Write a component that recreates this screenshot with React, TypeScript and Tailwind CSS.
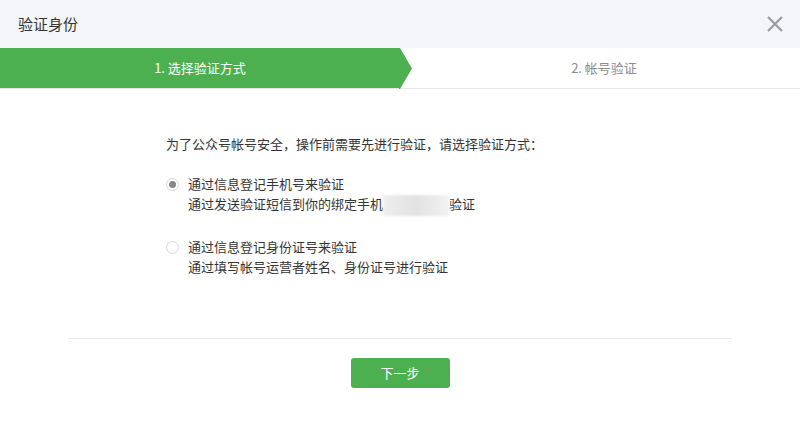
import React from "react";

const font = { fontFamily: '"PingFang SC","Noto Sans CJK SC","Liberation Sans",sans-serif' };

export default function App() {
  return (
    <div className="w-[800px] h-[438px] bg-white overflow-hidden" style={font}>
      <div className="h-[48px] bg-[#f4f5f9] flex items-center justify-between pl-[18px] pr-[16px]">
        <span className="text-[15px] text-[#353535]">验证身份</span>
        <svg width="18" height="18" viewBox="0 0 18 18" className="mt-[-1px]">
          <path d="M2 2 L16 16 M16 2 L2 16" stroke="#9a9a9a" strokeWidth="2.2" strokeLinecap="butt" />
        </svg>
      </div>
      <div className="relative h-[41px] flex border-b border-[#e7e7eb]">
        <div className="relative w-[400px] bg-[#4cb050] flex items-center justify-center text-[13px] text-white">
          <span>1. 选择验证方式</span>
          <svg className="absolute left-[399px] top-0" width="14" height="41" viewBox="0 0 14 41">
            <polygon points="0,0 1,0 13,20.5 1,41 0,41" fill="#4cb050" />
          </svg>
        </div>
        <div className="flex-1 flex items-center justify-center text-[13px] text-[#8d8d8d] pl-[8px]">
          2. 帐号验证
        </div>
      </div>
      <div className="pl-[166px] pt-[45px] text-[13px] text-[#353535] leading-[20px]">
        <div>为了公众号帐号安全，操作前需要先进行验证，请选择验证方式：</div>
        <div className="mt-[20px] flex">
          <div className="w-[22px] pt-[4px]">
            <div className="w-[13px] h-[13px] rounded-full border border-[#d8d8d8] flex items-center justify-center">
              <div className="w-[7px] h-[7px] rounded-full bg-[#888]" />
            </div>
          </div>
          <div>
            <div>通过信息登记手机号来验证</div>
            <div className="flex items-center h-[20px]">
              通过发送验证短信到你的绑定手机
              <span className="inline-block w-[66px] h-[21px] mt-[2px] bg-gradient-to-r from-[#eeeeee] via-[#e2e2e2] to-[#f2f2f2] blur-[1px]" />
              验证
            </div>
          </div>
        </div>
        <div className="mt-[23px] flex">
          <div className="w-[22px] pt-[4px]">
            <div className="w-[13px] h-[13px] rounded-full border border-[#d8d8d8]" />
          </div>
          <div>
            <div>通过信息登记身份证号来验证</div>
            <div>通过填写帐号运营者姓名、身份证号进行验证</div>
          </div>
        </div>
      </div>
      <div className="mx-[68px] mt-[61px] border-t border-[#e7e7eb]" />
      <div className="flex justify-center mt-[19px]">
        <button className="w-[99px] h-[30px] rounded-[3px] bg-[#4cb050] text-white text-[13px]">下一步</button>
      </div>
    </div>
  );
}
